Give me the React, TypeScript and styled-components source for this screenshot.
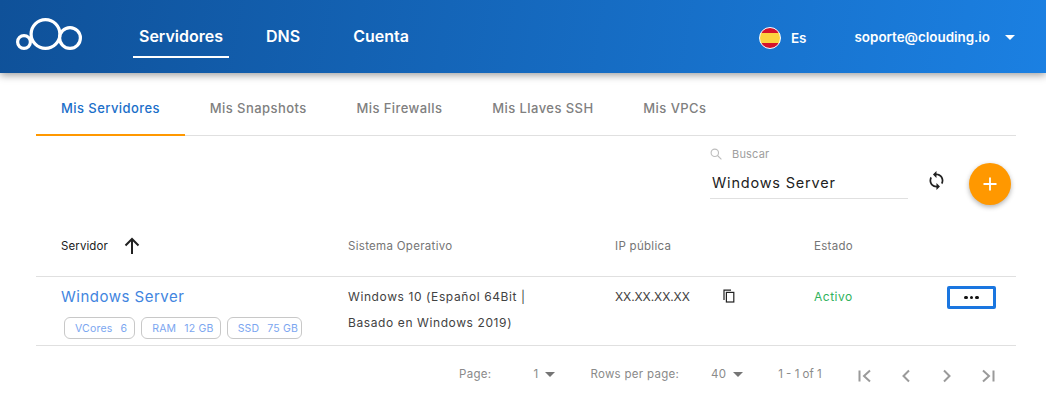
import React from "react";
import styled, { createGlobalStyle } from "styled-components";

const GlobalStyle = createGlobalStyle`
  html, body {
    margin: 0;
    padding: 0;
    background: #fff;
    font-family: Inter, Roboto, "Liberation Sans", sans-serif;
  }
  * { box-sizing: border-box; }
`;

const tabs = ["Mis Servidores", "Mis Snapshots", "Mis Firewalls", "Mis Llaves SSH", "Mis VPCs"];

const App = () => {
  return (
    <Page>
      <GlobalStyle />
      <Header>
        <Logo viewBox="0 0 66 32" fill="none" stroke="#fff" strokeWidth="3.2">
          <circle cx="8" cy="24" r="6.4" />
          <circle cx="29.5" cy="16" r="14.4" />
          <circle cx="54" cy="20" r="10.4" />
        </Logo>
        <Nav>
          <NavItem $active $gap={31}>Servidores</NavItem>
          <NavItem $gap={41}>DNS</NavItem>
          <NavItem>Cuenta</NavItem>
        </Nav>
        <Lang>
          <Flag />
          <span>Es</span>
        </Lang>
        <User>
          soporte@clouding.io
          <Caret $color="#fff" $gap={15} />
        </User>
      </Header>

      <Content>
        <Tabs>
          {tabs.map((t, i) => (
            <Tab key={t} $active={i === 0}>
              {t}
            </Tab>
          ))}
        </Tabs>

        <Toolbar>
          <Search>
            <SearchLabel>
              <svg width="12" height="12" viewBox="0 0 12 12" fill="none" stroke="#bdbdbd" strokeWidth="1.1">
                <circle cx="4.8" cy="4.8" r="3.7" />
                <path d="M7.5 7.5 11.4 11.4" />
              </svg>
              Buscar
            </SearchLabel>
            <SearchValue>Windows Server</SearchValue>
          </Search>
          <RefreshIcon viewBox="0 0 24 24" fill="#212121">
            <path d="M12 4V1L8 5l4 4V6c3.31 0 6 2.69 6 6 0 1.01-.25 1.97-.7 2.8l1.46 1.46C19.54 15.03 20 13.57 20 12c0-4.42-3.58-8-8-8zm0 14c-3.31 0-6-2.69-6-6 0-1.01.25-1.97.7-2.8L5.24 7.74C4.46 8.97 4 10.43 4 12c0 4.42 3.58 8 8 8v3l4-4-4-4v3z" />
          </RefreshIcon>
          <AddButton>
            <svg width="14" height="14" viewBox="0 0 14 14" stroke="#fff" strokeWidth="1.8">
              <path d="M7 0.5V13.5M0.5 7H13.5" />
            </svg>
          </AddButton>
        </Toolbar>

        <HeadRow>
          <FirstHead>
            Servidor
            <svg width="20" height="20" viewBox="0 0 20 20" fill="none" stroke="#212121" strokeWidth="2">
              <path d="M10 18V3M3.5 9.5 10 3l6.5 6.5" />
            </svg>
          </FirstHead>
          <HeadCell>Sistema Operativo</HeadCell>
          <HeadCell>IP pública</HeadCell>
          <HeadCell>Estado</HeadCell>
        </HeadRow>

        <BodyRow>
          <ServerCell>
            <ServerName>Windows Server</ServerName>
            <Chips>
              <Chip $right={7}>
                <span>VCores</span>
                <span>6</span>
              </Chip>
              <Chip $right={6}>
                <span>RAM</span>
                <span>12 GB</span>
              </Chip>
              <Chip $right={3}>
                <span>SSD</span>
                <span>75 GB</span>
              </Chip>
            </Chips>
          </ServerCell>
          <OsCell>
            Windows 10 (Español 64Bit |
            <br />
            Basado en Windows 2019)
          </OsCell>
          <IpCell>
            XX.XX.XX.XX
            <CopyIcon viewBox="0 0 12 14" fill="none" stroke="#212121" strokeWidth="1.2">
              <path d="M1 11V1.2H8" />
              <rect x="3.4" y="3.4" width="7.4" height="9.6" />
            </CopyIcon>
          </IpCell>
          <StatusCell>
            <StatusText>Activo</StatusText>
            <MoreButton>
              <Dot />
              <Dot />
              <Dot />
            </MoreButton>
          </StatusCell>
        </BodyRow>

        <Pager>
          <PagerText>Page:</PagerText>
          <PagerSelect>
            1
            <Caret $color="#757575" $gap={7} />
          </PagerSelect>
          <PagerText>Rows per page:</PagerText>
          <PagerSelect>
            40
            <Caret $color="#757575" $gap={7} />
          </PagerSelect>
          <PagerRange>1 - 1 of 1</PagerRange>
          <PagerIcons>
            <PagerIcon viewBox="0 0 14 14">
              <path d="M1.5 1.5V12.5M12 1.5 6 7l6 5.5" />
            </PagerIcon>
            <PagerIcon viewBox="0 0 14 14">
              <path d="M10 1.5 4.5 7l5.5 5.5" />
            </PagerIcon>
            <PagerIcon viewBox="0 0 14 14">
              <path d="M4 1.5 9.5 7 4 12.5" />
            </PagerIcon>
            <PagerIcon viewBox="0 0 14 14">
              <path d="M12.5 1.5V12.5M2 1.5 8 7l-6 5.5" />
            </PagerIcon>
          </PagerIcons>
        </Pager>
      </Content>
    </Page>
  );
};

export default App;

const Page = styled.div`
  width: 1046px;
  height: 411px;
  overflow: hidden;
  position: relative;
`;

const Header = styled.header`
  height: 73px;
  display: flex;
  align-items: center;
  padding: 0 31px 0 16px;
  background: linear-gradient(100deg, #0f5199 0%, #1b80e2 100%);
  box-shadow: 0 2px 8px rgba(0, 0, 0, 0.4);
  color: #fff;
  font-weight: 600;
  position: relative;
`;

const Logo = styled.svg`
  width: 66px;
  height: 32px;
  margin-top: -5px;
`;

const Nav = styled.nav`
  display: flex;
  margin-left: 51px;
  height: 100%;
`;

const NavItem = styled.div<{ $active?: boolean; $gap?: number }>`
  height: 100%;
  padding: 26px 6px 0;
  margin-right: ${(props) => props.$gap || 0}px;
  font-size: 16px;
  line-height: 20px;
  position: relative;

  &::after {
    content: "";
    display: ${(props) => (props.$active ? "block" : "none")};
    position: absolute;
    left: 0;
    right: 0;
    bottom: 15px;
    height: 2px;
    background: #fff;
  }
`;

const Lang = styled.div`
  display: flex;
  align-items: center;
  margin-left: auto;
  gap: 10px;
  font-size: 13.5px;
  margin-top: 3px;
`;

const Flag = styled.span`
  width: 22px;
  height: 22px;
  border-radius: 50%;
  border: 1px solid #fff;
  background: linear-gradient(#d5132c 0 26%, #fdd33f 26% 74%, #d5132c 74%);
`;

const User = styled.div`
  display: flex;
  align-items: center;
  margin-left: 48px;
  font-size: 13.4px;
  margin-top: 1px;
`;

const Caret = styled.span<{ $color: string; $gap: number }>`
  width: 0;
  height: 0;
  margin-left: ${(props) => props.$gap}px;
  border-left: 5px solid transparent;
  border-right: 5px solid transparent;
  border-top: 5px solid ${(props) => props.$color};
`;

const Content = styled.main`
  padding: 0 30px 0 36px;
`;

const Tabs = styled.div`
  display: flex;
  height: 63px;
  border-bottom: 1px solid #e0e0e0;
`;

const Tab = styled.div<{ $active?: boolean }>`
  padding: 27px 25px 0;
  font-size: 13px;
  line-height: 16px;
  font-weight: 500;
  letter-spacing: 0.43px;
  margin-right: -0.2px;
  color: ${(props) => (props.$active ? "#1b6fc9" : "#808080")};
  border-bottom: 2px solid ${(props) => (props.$active ? "#ff9800" : "transparent")};
  height: 63px;
`;

const Toolbar = styled.div`
  display: flex;
  align-items: flex-start;
  height: 89px;
  padding: 11px 5px 0 674px;
`;

const Search = styled.div`
  width: 199px;
  height: 52px;
  border-bottom: 1px solid #e0e0e0;
`;

const SearchLabel = styled.div`
  display: flex;
  align-items: center;
  gap: 10px;
  height: 14px;
  font-size: 11px;
  letter-spacing: 0.2px;
  color: #9e9e9e;
`;

const SearchValue = styled.div`
  margin: 12px 0 0 2px;
  font-size: 14.5px;
  line-height: 20px;
  font-weight: 400;
  letter-spacing: 0.8px;
  color: #212121;
`;

const RefreshIcon = styled.svg`
  width: 21px;
  height: 21px;
  margin: 23px 0 0 18px;
`;

const AddButton = styled.div`
  width: 42px;
  height: 42px;
  margin: 16px 0 0 22px;
  border-radius: 50%;
  background: #ff9800;
  box-shadow: 0 2px 5px rgba(0, 0, 0, 0.3);
  display: flex;
  align-items: center;
  justify-content: center;
`;

const columns = "312px 267px 199px 202px";

const HeadRow = styled.div`
  display: grid;
  grid-template-columns: ${columns};
  height: 52px;
  border-bottom: 1px solid #e0e0e0;
  padding-top: 11px;
`;

const HeadCell = styled.div`
  font-size: 11.5px;
  line-height: 20px;
  letter-spacing: 0.3px;
  color: #757575;
`;

const FirstHead = styled(HeadCell)`
  padding-left: 25px;
  color: #212121;
  letter-spacing: 0.1px;
  display: flex;
  align-items: center;
  gap: 14px;
  height: 20px;
`;

const BodyRow = styled.div`
  display: grid;
  grid-template-columns: ${columns};
  height: 69px;
  border-bottom: 1px solid #e0e0e0;
`;

const ServerCell = styled.div`
  padding: 10px 0 0 25px;
`;

const ServerName = styled.div`
  font-size: 15px;
  line-height: 20px;
  letter-spacing: 0.5px;
  color: #4285e0;
`;

const Chips = styled.div`
  display: flex;
  gap: 6px;
  margin: 10px 0 0 3px;
`;

const Chip = styled.div<{ $right: number }>`
  display: flex;
  gap: 8px;
  height: 22px;
  padding: 0 ${(props) => props.$right}px 0 10px;
  align-items: center;
  border: 1px solid #c8c8c8;
  border-radius: 6px;
  font-size: 10.5px;
  letter-spacing: 0.2px;
  color: #7ba6f0;
`;

const OsCell = styled.div`
  padding-top: 7px;
  font-size: 12px;
  line-height: 26px;
  letter-spacing: 0.6px;
  color: #424242;
`;

const IpCell = styled.div`
  display: flex;
  align-items: flex-start;
  padding-top: 12px;
  font-size: 12px;
  line-height: 16px;
  letter-spacing: -0.1px;
  color: #424242;
`;

const CopyIcon = styled.svg`
  width: 12px;
  height: 14px;
  margin-left: 33px;
`;

const StatusCell = styled.div`
  display: flex;
  align-items: flex-start;
  padding-top: 12px;
  font-size: 12px;
  line-height: 16px;
  letter-spacing: 0.5px;
  color: #2fb25c;
`;

const StatusText = styled.span`
  width: 133px;
`;

const MoreButton = styled.div`
  display: flex;
  align-items: center;
  justify-content: center;
  gap: 2px;
  width: 49px;
  height: 23px;
  margin-top: -3px;
  border: 3px solid #1a76e0;
  border-radius: 2px;
`;

const Dot = styled.span`
  width: 3.5px;
  height: 3.5px;
  border-radius: 50%;
  background: #111;
`;

const Pager = styled.div`
  display: flex;
  align-items: center;
  height: 56px;
  padding-left: 423px;
  font-size: 11.5px;
  letter-spacing: 0.3px;
  color: #8a8a8a;
`;

const PagerText = styled.span``;

const PagerSelect = styled.span`
  display: flex;
  align-items: center;
  justify-content: flex-end;
  width: 64px;
  margin-right: 35px;
`;

const PagerRange = styled.span`
  width: 80px;
  letter-spacing: 0;
`;

const PagerIcons = styled.div`
  display: flex;
  gap: 27px;
  margin-top: 3px;
`;

const PagerIcon = styled.svg`
  width: 14px;
  height: 14px;
  fill: none;
  stroke: #9a9a9a;
  stroke-width: 2;
`;
